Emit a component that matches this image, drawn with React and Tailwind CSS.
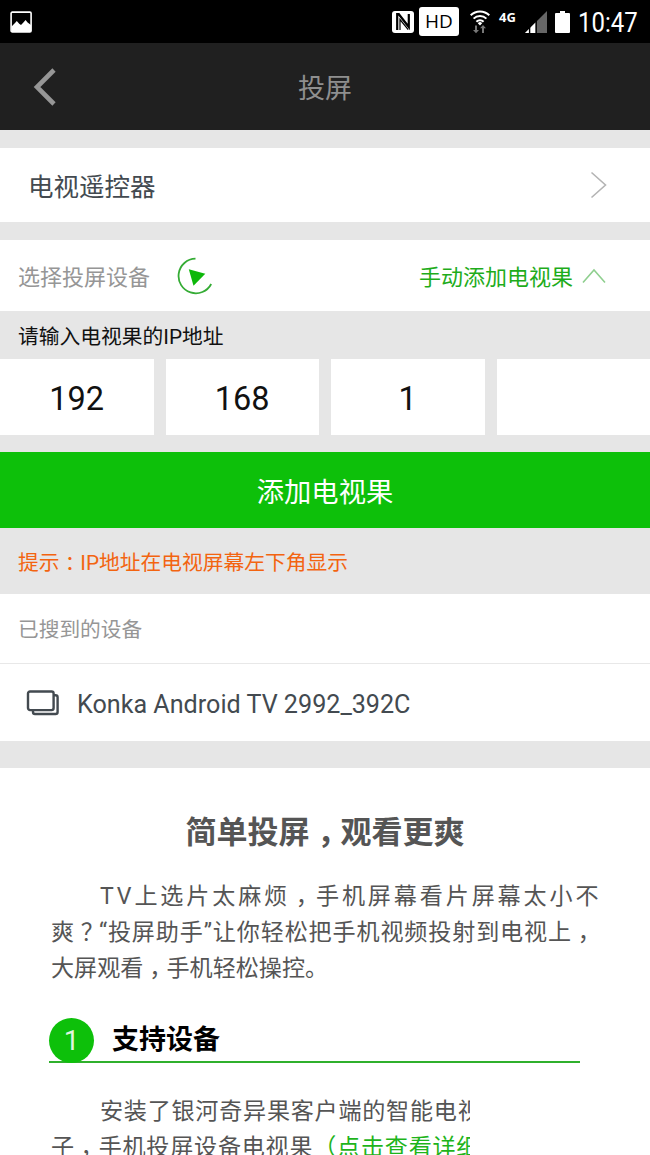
import React from "react";

const Mark = ({ children }) => (
  <span className="px-[0.25em] [font-feature-settings:'halt']">{children}</span>
);

const Latin = ({ children }) => (
  <span className="font-[Roboto,sans-serif] leading-none">{children}</span>
);

function StatusBar() {
  return (
    <div className="flex h-[43px] items-center bg-black text-white">
      <svg className="ml-[10px] h-[22px] w-[22px]" viewBox="0 0 22 22">
        <rect x="1.1" y="1.1" width="20" height="19.8" rx="1.2" fill="none" stroke="#fff" strokeWidth="1.6" />
        <path d="M1.5 15.5 5 12l1.8-2 2.4 2.8 1.8 1.2 2.4-2.6L15.6 9l2 2.6L21 14v6.5H1.5Z" fill="#fff" />
      </svg>
      <svg className="ml-[360px] h-[22px] w-[22px]" viewBox="0 0 22 22">
        <rect width="22" height="22" rx="3" fill="#fff" />
        <path d="M5.2 19V3.2h1.6L16.8 16V3" fill="none" stroke="#000" strokeWidth="2.2" />
        <path d="M8 19V8.5l8.2 10.2" fill="none" stroke="#000" strokeWidth="1.2" />
      </svg>
      <div className="ml-[5px] flex h-[29px] w-[40px] items-center justify-center rounded-[3px] bg-white font-['Open_Sans',sans-serif] text-[19px] leading-none text-black">
        HD
      </div>
      <svg className="ml-[11px] h-[24px] w-[20px]" viewBox="0 0 20 24">
        <g fill="none" stroke="#fff" strokeWidth="2">
          <path d="M.7 5.3a13.2 13.2 0 0 1 18.6 0" />
          <path d="M3.6 8.6a9 9 0 0 1 12.8 0" />
          <path d="M6.4 11.7a5 5 0 0 1 7.2 0" />
        </g>
        <path d="M7.8 13.2a3 3 0 0 1 4.4 0L10 15.6Z" fill="#fff" />
        <path d="M5 15.5h2V20h2l-3 3.3L3 20h2ZM12 23h2v-4.8h2L13 15l-3 3.2h2Z" fill="#777" />
      </svg>
      <div className="mb-[9px] ml-[9px] w-[19px] font-['Open_Sans',sans-serif] text-[13px] font-bold leading-none">4G</div>
      <svg className="ml-[7px] h-[22px] w-[22px]" viewBox="0 0 22 22">
        <path d="M0 22 22 0v22Z" fill="#666" />
        <path d="M0 22 10.5 11.5V22Z" fill="#fff" />
        <path d="M4.6 16v6M11.2 10v12" stroke="#000" strokeWidth="1.4" />
      </svg>
      <svg className="ml-[8px] h-[22px] w-[15px]" viewBox="0 0 15 22">
        <path d="M5 0h5v2h4a1 1 0 0 1 1 1v18a1 1 0 0 1-1 1H1a1 1 0 0 1-1-1V3a1 1 0 0 1 1-1h4Z" fill="#fff" />
      </svg>
      <div className="ml-[8px] mt-[3px] origin-left scale-x-[0.87] whitespace-nowrap font-[Roboto,sans-serif] text-[27.5px] leading-none">10:47</div>
    </div>
  );
}

function Octet({ value }) {
  return (
    <div className="flex h-[76px] items-center justify-center bg-white pt-[4px] font-[Roboto,sans-serif] text-[32.5px] leading-none text-[#111]">
      {value}
    </div>
  );
}

export default function App() {
  return (
    <div className="flex h-[1155px] w-[650px] flex-col overflow-hidden bg-[#e6e6e6] font-['Noto_Sans_CJK_SC',sans-serif]">
      <StatusBar />
      <header className="grid h-[87px] grid-cols-[1fr_auto_1fr] items-center bg-[#202020]">
        <svg className="ml-[33px] h-[38px] w-[24px]" viewBox="0 0 24 38">
          <path d="M21 2 4 19l17 17" fill="none" stroke="#969696" strokeWidth="4.6" />
        </svg>
        <h1 className="text-[27px] leading-none text-[#8f8f8f]">投屏</h1>
      </header>

      <div className="mt-[18px] flex h-[74px] items-center justify-between bg-white pl-[28px] pr-[43px]">
        <span className="text-[25.5px] leading-none text-[#434a50]">电视遥控器</span>
        <svg className="h-[28px] w-[17px]" viewBox="0 0 17 28">
          <path d="m1.5 1.5 14 12.5-14 12.5" fill="none" stroke="#b4b4b4" strokeWidth="1.6" />
        </svg>
      </div>

      <div className="mt-[18px] flex h-[71px] items-center bg-white pl-[18px] pr-[44px] text-[22px] leading-none">
        <span className="mb-[2px] text-[#969696]">选择投屏设备</span>
        <svg className="ml-[26px] h-[38px] w-[38px]" viewBox="0 0 38 38">
          <path d="M19.5 1.7A17.3 17.3 0 1 0 35.2 27" fill="none" stroke="#35ac35" strokeWidth="1.8" />
          <path d="m12.8 12.3 16.5 4.5-11.8 12Z" fill="#0db80a" />
        </svg>
        <span className="mb-[2px] ml-auto text-[#1eac1b]">手动添加电视果</span>
        <svg className="ml-[9px] h-[16px] w-[24px]" viewBox="0 0 24 16">
          <path d="M1 14.5 12 2l11 12.5" fill="none" stroke="#8fcf8f" strokeWidth="1.6" />
        </svg>
      </div>

      <div className="flex h-[48px] items-center pl-[18px] pt-[2px] text-[20.75px] leading-none text-[#111]">
        <span>请输入电视果的<Latin>IP</Latin>地址</span>
      </div>
      <div className="grid grid-cols-4 gap-[12px]">
        <Octet value="192" />
        <Octet value="168" />
        <Octet value="1" />
        <Octet value="" />
      </div>
      <button className="mt-[17px] h-[76px] bg-[#0dc00a] pt-[2px] text-[27.3px] leading-none text-white">添加电视果</button>
      <div className="flex h-[66px] items-center pl-[18px] pt-[2px] text-[20.75px] leading-none text-[#f36410]">
        <span>提示<Mark>：</Mark><Latin>IP</Latin>地址在电视屏幕左下角显示</span>
      </div>

      <div className="flex h-[69px] items-center bg-white pl-[18px] text-[20.7px] leading-none text-[#969696]">已搜到的设备</div>
      <div className="flex h-[78px] items-center border-t border-[#e8e8e8] bg-white pl-[26px] font-[Roboto,sans-serif] text-[25.15px] leading-none text-[#434a50]">
        <svg className="h-[26px] w-[34px]" viewBox="0 0 34 26" fill="none" stroke="#434a50" strokeWidth="2.4">
          <rect x="2" y="1.5" width="25.6" height="18.6" rx="2" />
          <path d="M28 5.2h1.6a2 2 0 0 1 2 2V22a2 2 0 0 1-2 2H9a2 2 0 0 1-2-2v-1.5" />
        </svg>
        <span className="ml-[17px] mt-[5px] whitespace-nowrap">Konka Android TV 2992_392C</span>
      </div>

      <main className="mt-[27px] flex-1 overflow-hidden bg-white text-[23.1px] leading-[36px] text-[#555]">
        <h2 className="pt-[43px] text-center text-[31px] font-bold leading-[38px]">简单投屏<Mark>，</Mark>观看更爽</h2>
        <div className="mt-[27px] whitespace-nowrap pl-[51px]">
          <p className="pl-[49px] tracking-[2.85px]"><Latin>TV</Latin>上选片太麻烦<Mark>，</Mark>手机屏幕看片屏幕太小不</p>
          <p className="tracking-[0.85px]">爽<Mark>？</Mark><Latin>“</Latin>投屏助手<Latin>”</Latin>让你轻松把手机视频投射到电视上<Mark>，</Mark></p>
          <p>大屏观看<Mark>，</Mark>手机轻松操控。</p>
        </div>
        <div className="ml-[49px] mt-[35px] flex h-[44px] w-[531px] items-center border-b-2 border-[#2fb02c]">
          <span className="mt-[1px] flex h-[45px] w-[45px] shrink-0 items-center justify-center rounded-full bg-[#0dc00a] font-[Roboto,sans-serif] text-[28px] leading-none text-[#dff5df]">1</span>
          <h3 className="mb-[6px] ml-[18px] text-[27px] font-bold leading-none text-black">支持设备</h3>
        </div>
        <div className="mt-[28px] w-[470px] overflow-hidden whitespace-nowrap pl-[51px] tracking-[0.75px]">
          <p className="pl-[49px]">安装了银河奇异果客户端的智能电视盒</p>
          <p>子<Mark>，</Mark>手机投屏设备电视果<span className="text-[#1eb41b]">（点击查看详细</span></p>
        </div>
      </main>
    </div>
  );
}
